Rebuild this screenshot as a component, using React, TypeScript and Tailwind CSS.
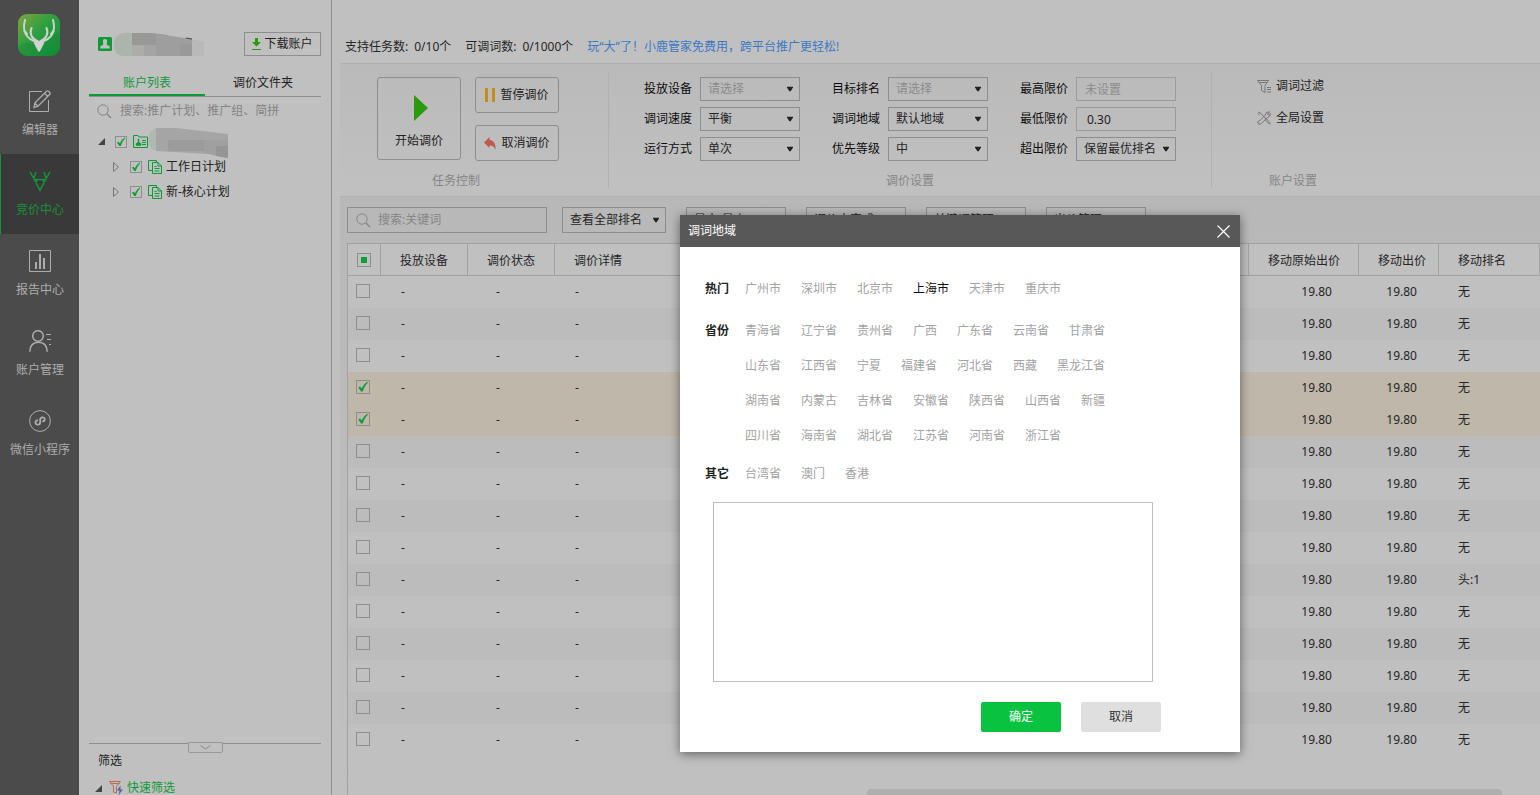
import { useState, ReactNode } from "react";
import clsx from "clsx";

const hotCities = ["广州市", "深圳市", "北京市", "上海市", "天津市", "重庆市"];
const provinces = [
  "青海省", "辽宁省", "贵州省", "广西", "广东省", "云南省", "甘肃省",
  "山东省", "江西省", "宁夏", "福建省", "河北省", "西藏", "黑龙江省",
  "湖南省", "内蒙古", "吉林省", "安徽省", "陕西省", "山西省", "新疆",
  "四川省", "海南省", "湖北省", "江苏省", "河南省", "浙江省",
];
const others = ["台湾省", "澳门", "香港"];

interface Row {
  id: number;
  checked: boolean;
  rank: string;
}

const initialRows: Row[] = Array.from({ length: 15 }, (_, i) => ({
  id: i,
  checked: i === 3 || i === 4,
  rank: i === 9 ? "头:1" : "无",
}));

function Checkbox({ label, checked, onChange, partial, small }: { label: string; checked?: boolean; onChange?: () => void; partial?: boolean; small?: boolean }) {
  return (
    <span className={clsx("relative block shrink-0", small ? "h-3 w-3" : "h-3.5 w-3.5")}>
      <input
        type="checkbox"
        aria-label={label}
        checked={checked ?? false}
        onChange={() => onChange?.()}
        className="block h-full w-full appearance-none border border-[#8e8e8e]"
      />
      {checked && (
        <svg viewBox="0 0 14 14" className="pointer-events-none absolute inset-0 h-full w-full" fill="#0d9f38">
          <path d="M2.300 7.600 4.300 6.600 5.700 8.600C7 5.600 8.800 3.400 11.300 1.800L11.900 2.500C9.500 5 7.900 7.800 6.800 11.600H5Z" />
        </svg>
      )}
      {partial && <span className="pointer-events-none absolute inset-1 bg-[#0d9f38]" />}
    </span>
  );
}

function Select({ label, value, muted, className }: { label: string; value: string; muted?: boolean; className?: string }) {
  return (
    <span className={clsx("relative block", className)}>
      <select
        aria-label={label}
        defaultValue={value}
        className={clsx(
          "block h-full w-full appearance-none border border-[#8e8e8e] bg-transparent pr-4 pl-[7px] text-xs",
          muted ? "text-[#8b8b8b]" : "text-[#262626]"
        )}
      >
        <option>{value}</option>
      </select>
      <svg viewBox="0 0 6 5" className="pointer-events-none absolute top-1/2 right-[7px] h-[5px] w-[6px] -translate-y-1/2" fill="#222">
        <path d="M0 0H6V1L3.500 5H2.500L0 1Z" />
      </svg>
    </span>
  );
}

function Field({ label, children }: { label: string; children: ReactNode }) {
  return (
    <div className="flex items-center gap-2">
      <span className="w-12 text-[#0c0c0c]">{label}</span>
      {children}
    </div>
  );
}

function SearchIcon() {
  return (
    <svg viewBox="0 0 15 15" className="h-[15px] w-[15px] shrink-0" fill="none" stroke="#888">
      <circle cx="6" cy="6" r="5.2" />
      <path d="M9.8 9.8 14 14" strokeWidth="1.6" />
    </svg>
  );
}

function NavItem({ label, active, children }: { label: string; active?: boolean; children: ReactNode }) {
  return (
    <a
      href="#"
      className={clsx(
        "flex h-20 flex-col items-center border-l pt-4",
        active ? "border-[#17913a] bg-[#393939] text-[#17913a]" : "border-transparent text-[#adadad]"
      )}
    >
      <svg viewBox="0 0 22 22" className="h-[22px] w-[22px] shrink-0" fill="none" stroke="currentColor">
        {children}
      </svg>
      <span className="mt-2 leading-5 whitespace-nowrap">{label}</span>
    </a>
  );
}

function Sidebar() {
  return (
    <nav className="w-[79px] shrink-0 bg-[#4b4b4b]">
      <div className="flex h-[74px] pt-3.5 pl-[18px]">
        <svg viewBox="0 0 42 42" className="h-[42px] w-[42px]">
          <defs>
            <linearGradient id="logo" x1="0" y1="0" x2="1" y2="1">
              <stop offset="0" stopColor="#7fa63c" />
              <stop offset="0.45" stopColor="#2e9e42" />
              <stop offset="1" stopColor="#119038" />
            </linearGradient>
          </defs>
          <rect width="42" height="42" rx="9" fill="url(#logo)" />
          <path d="M0 32C12 24 18 34 28 28S38 18 42 19V33a9 9 0 0 1-9 9H9a9 9 0 0 1-9-9Z" fill="#0c7f30" opacity="0.25" />
          <g fill="none" stroke="#cdd3cb" strokeWidth="2" strokeLinecap="round">
            <path d="M7 6C4 17 8 25 19 28" />
            <path d="M35 6C38 17 34 25 23 28" />
            <path d="M13.500 14C11 20 14 25 20 27.500" />
            <path d="M28.500 14C31 20 28 25 22 27.500" />
            <path d="M6.500 17 9 20M35.500 17 33 20" />
          </g>
          <path d="M15.500 28.500Q21 26.500 26.500 28.500L21.800 37.500H20.200Z" fill="#d3d3d3" />
        </svg>
      </div>
      <NavItem label="编辑器">
        <path d="M13 1.500H.5v20h19V10" />
        <path d="M5 17.500 5.800 13 17.500 1.200Q18.500.4 19.500 1.200L20.800 2.500Q21.500 3.400 20.800 4.300L9 16.200Z M15.500 3.300 18.800 6.600M5.800 13 9 16.200" strokeWidth="1.300" />
      </NavItem>
      <NavItem label="竞价中心" active>
        <path d="M.8 1.500 4.500 8 11 20.300 17.500 8 21.200 1.500M5 9.500H17M6.500 12.500 9 9.500M15.500 12.500 13 9.500M7 2 5 8M2.300 5.300 5.500 8M15 2 17 8M19.700 5.300 16.500 8" strokeWidth="1.500" />
      </NavItem>
      <NavItem label="报告中心">
        <path d="M.5.5h21v21H.5Z" />
        <path d="M7 12v7M11 4v15M15 8v11" strokeWidth="2" />
      </NavItem>
      <NavItem label="账户管理">
        <circle cx="9" cy="6" r="5.300" strokeWidth="1.500" />
        <path d="M.8 21.800C1 15.500 4.500 12.300 9.500 12.300S18 15.500 18.200 21.800" strokeWidth="1.500" />
        <path d="M17 4.500h5M18 9.500h4M20 14.500h2" />
      </NavItem>
      <NavItem label="微信小程序">
        <circle cx="11" cy="11" r="10.400" />
        <path d="M9 10.500C7 10.200 6.200 11.500 6.500 13 7 15.300 11 15.300 11.200 12.500V9.500C11.300 6.800 15.500 6.500 15.800 9 16 10.500 15 11.500 13.200 11.300" strokeWidth="1.800" />
      </NavItem>
    </nav>
  );
}

function PlanRow({ name }: { name: string }) {
  const [checked, setChecked] = useState(true);

  return (
    <li className="flex h-[25px] items-center pl-[34px] text-[#222]">
      <svg viewBox="0 0 6 10" className="h-2.5 w-1.5" fill="none" stroke="#777">
        <path d="M.5.5 5.500 5 .5 9.500Z" />
      </svg>
      <span className="ml-[11px]">
        <Checkbox small label={name} checked={checked} onChange={() => setChecked(!checked)} />
      </span>
      <svg viewBox="0 0 14 14" className="ml-1.5 h-3.5 w-3.5" fill="none" stroke="#0f9a38">
        <path d="M4 10.500H.5V.5H8.500V2" />
        <path d="M4.500 2.500H10L13.500 6v7.500h-9Z M10 2.500V6h3.500M6.500 6.500h2M6.500 8.500h5M6.500 11h5" />
      </svg>
      <span className="ml-1">{name}</span>
    </li>
  );
}

function AccountPanel() {
  const [rootChecked, setRootChecked] = useState(true);

  return (
    <aside className="flex w-[253px] shrink-0 flex-col border-r border-[#8e8e8e]">
      <div className="mx-2.5 mt-8 flex h-6 items-center pl-[9px]">
        <svg viewBox="0 0 14 14" className="h-3.5 w-3.5 shrink-0">
          <rect width="14" height="14" rx="1.500" fill="#0f9a38" />
          <path d="M7 2C4.800 2 4.500 4 5.200 6.200 5.700 7.500 5 8 2.300 9.300V11.500H11.700V9.300C9 8 8.300 7.500 8.800 6.200 9.500 4 9.200 2 7 2Z" fill="#c0c0c0" />
        </svg>
        <svg viewBox="0 0 90 25" className="ml-0.5 h-[25px] w-[90px]">
          <path d="M6 2Q10 0 18 1V24H10Q0 24 0 12 0 5 6 2Z" fill="#abb5ac" />
          <path d="M18 1H40L90 10V24H18Z" fill="#acacac" />
          <path d="M18 1H36L54 3V13H18Z" fill="#989898" />
          <path d="M30 13H42V24H30Z" fill="#a4a4a4" />
          <path d="M42 2 78 7V24H42V12Z" fill="#9e9e9e" />
          <path d="M66 12H78V24H66Z" fill="#999" />
          <path d="M78 8 90 10V24H78Z" fill="#b9b9b9" />
          <path d="M72 6 78 7" stroke="#444" />
        </svg>
        <button className="ml-auto flex h-6 w-[77px] items-center justify-center gap-[3px] border border-[#8e8e8e] text-[#222]">
          <svg viewBox="0 0 9 12" className="h-3 w-[9px]" fill="#2c9a0c">
            <path d="M3 0H6V4H9L4.500 8.500 0 4H3ZM0 11H9V12H0Z" />
          </svg>
          下载账户
        </button>
      </div>

      <div role="tablist" className="mx-2.5 mt-3 flex h-[29px] border-b border-[#8e8e8e]">
        <button role="tab" aria-selected="true" className="flex-1 border-b-2 border-[#0f9a38] pt-1 text-[#0f9a38]">
          账户列表
        </button>
        <button role="tab" aria-selected="false" className="flex-1 border-b-2 border-transparent pt-1 text-[#222]">
          调价文件夹
        </button>
      </div>

      <label className="mx-2.5 flex h-7 items-center gap-2 pl-2">
        <SearchIcon />
        <input
          aria-label="搜索"
          placeholder="搜索:推广计划、推广组、简拼"
          className="w-full bg-transparent text-xs outline-none placeholder:text-[#848484]"
        />
      </label>

      <ul className="mt-1">
        <li className="flex h-[25px] items-center pl-[19px]">
          <svg viewBox="0 0 7 7" className="h-[7px] w-[7px]" fill="#444">
            <path d="M7 0V7H0Z" />
          </svg>
          <span className="ml-2.5">
            <Checkbox small label="账户" checked={rootChecked} onChange={() => setRootChecked(!rootChecked)} />
          </span>
          <svg viewBox="0 0 15 13" className="ml-1.5 h-[13px] w-[15px]" fill="none" stroke="#0f9a38">
            <path d="M.5 12.500V.5H5L6 2H14.500V12.500ZM9 5.500h4M9 7.500h4M9 9.500h4" />
            <path d="M3 10.500V8.500L5 7.500V4H6V7.500L8 8.500V10.500Z" fill="#0f9a38" strokeWidth=".5" />
          </svg>
          <svg viewBox="0 0 80 32" className="h-8 w-20">
            <path d="M8 2V25Q0 23 0 14 0 5 8 2Z" fill="#aebaaf" />
            <path d="M8 2H28L80 8V32L60 28 8 25Z" fill="#a5a5a5" />
            <path d="M20 14H56V25H20Z" fill="#9b9b9b" />
            <path d="M56 14H80V32L56 27Z" fill="#a0a0a0" />
            <path d="M68 20H80V32L68 30Z" fill="#959595" />
          </svg>
        </li>
        <PlanRow name="工作日计划" />
        <PlanRow name="新-核心计划" />
      </ul>

      <div className="mx-2.5 mt-auto flex h-[52px] flex-col border-t border-[#8e8e8e]">
        <button
          aria-label="收起"
          className="-mt-0.5 flex h-[11px] w-[35px] shrink-0 items-center justify-center self-center rounded-b-xs border border-[#999] bg-[#c0c0c0]"
        >
          <svg viewBox="0 0 11 5" className="h-[5px] w-[11px]" fill="none" stroke="#888">
            <path d="M.5.5 5.500 4 10.500.5" />
          </svg>
        </button>
        <span className="pl-[9px] leading-4 text-[#222]">筛选</span>
        <a href="#" className="mt-[11px] flex h-4 shrink-0 items-center pl-1.5 text-[#0f9a38]">
          <svg viewBox="0 0 7 7" className="h-[7px] w-[7px]" fill="#444">
            <path d="M7 0V7H0Z" />
          </svg>
          <svg viewBox="0 0 14 14" className="ml-[7px] h-3.5 w-3.5" fill="none">
            <path d="M.5.500H11.500L7.500 5.500V12L4.500 11V5.500Z M1.500 2.500H10.500" stroke="#bd6a50" />
            <path d="M11.500 4.500 8 9.500H10.500L9.500 14 14 8.500H11.500Z" fill="#4d63ab" />
          </svg>
          <span className="ml-1">快速筛选</span>
        </a>
      </div>
    </aside>
  );
}

function Toolbar() {
  const box = "flex items-center justify-center rounded-[3px] border border-[#8e8e8e] text-[#222]";

  return (
    <section className="flex h-[125px] border-t border-[#b1b1b1] bg-linear-to-b from-[#bababa] to-[#c0c0c0] pt-2">
      <div className="flex w-[269px] shrink-0 flex-col border-r border-[#b1b1b1] pt-[5px]">
        <div className="flex gap-3.5 pl-[37px]">
          <button className={clsx(box, "h-[83px] w-[84px] flex-col gap-3 pt-1.5")}>
            <svg viewBox="0 0 14 26" className="ml-1 h-[26px] w-3.5" fill="#2c9a0c">
              <path d="M0 0 14 13 0 26Z" />
            </svg>
            开始调价
          </button>
          <div className="flex flex-col gap-3">
            <button className={clsx(box, "h-9 w-[84px] gap-[5px]")}>
              <svg viewBox="0 0 10 14" className="h-3.5 w-2.5" fill="#c98c13">
                <path d="M0 0H3V14H0ZM7 0H10V14H7Z" />
              </svg>
              暂停调价
            </button>
            <button className={clsx(box, "h-9 w-[84px] gap-[5px]")}>
              <svg viewBox="0 0 12 13" className="h-[13px] w-3" fill="#bd5a4c">
                <path d="M0 5.500 5.500 0V3C10 3.500 12 7 11.500 13 10 9.500 8.500 8.500 5.500 8.500V11Z" />
              </svg>
              取消调价
            </button>
          </div>
        </div>
        <p className="mt-3 pr-9 text-center leading-4 text-[#868686]">任务控制</p>
      </div>

      <div className="w-[603px] shrink-0 border-r border-[#b1b1b1] pt-[5px]">
        <div className="flex justify-center gap-8">
          <div className="flex flex-col gap-1.5">
            <Field label="投放设备"><Select label="投放设备" value="请选择" muted className="h-6 w-[100px]" /></Field>
            <Field label="调词速度"><Select label="调词速度" value="平衡" className="h-6 w-[100px]" /></Field>
            <Field label="运行方式"><Select label="运行方式" value="单次" className="h-6 w-[100px]" /></Field>
          </div>
          <div className="flex flex-col gap-1.5">
            <Field label="目标排名"><Select label="目标排名" value="请选择" muted className="h-6 w-[100px]" /></Field>
            <Field label="调词地域"><Select label="调词地域" value="默认地域" className="h-6 w-[100px]" /></Field>
            <Field label="优先等级"><Select label="优先等级" value="中" className="h-6 w-[100px]" /></Field>
          </div>
          <div className="flex flex-col gap-1.5">
            <Field label="最高限价">
              <input aria-label="最高限价" placeholder="未设置" className="h-6 w-[100px] border border-[#9c9c9c] px-2 text-xs placeholder:text-[#8b8b8b]" />
            </Field>
            <Field label="最低限价">
              <input aria-label="最低限价" defaultValue="0.30" className="h-6 w-[100px] border border-[#9c9c9c] px-2.5 text-xs text-[#222]" />
            </Field>
            <Field label="超出限价"><Select label="超出限价" value="保留最优排名" className="h-6 w-[100px]" /></Field>
          </div>
        </div>
        <p className="mt-3 text-center leading-4 text-[#868686]">调价设置</p>
      </div>

      <div className="flex w-[162px] flex-col pt-1.5 pl-[45px] text-[#222]">
        <a href="#" className="flex h-4 items-center gap-[5px]">
          <svg viewBox="0 0 14 13" className="h-[13px] w-3.5" fill="none" stroke="#777">
            <path d="M.5.5H11.500L8 5.500V12.500L4.500 10.500V5.500Z M2 2.500H10M10 7.500h4M10 9.500h4M10 12h4" />
          </svg>
          调词过滤
        </a>
        <a href="#" className="mt-4 flex h-4 items-center gap-[5px]">
          <svg viewBox="0 0 14 14" className="h-3.5 w-3.5" fill="none" stroke="#777">
            <path d="M1 1 3.500 2 9 8 8.500 9 12 13Q13.500 13 13 11.500L9.500 8M.8 3 2.500 3.500" />
            <path d="M12.500.8 10.500 3 11.300 4 13.300 2.500Q13.800 5.500 11 6L4.800 12Q4 13.500 2 13.300.3 12.500.8 10.700 1.500 9.500 3 9.500L8.300 4Q8.500.5 12.500.8ZM2.500 11.500h.5" />
          </svg>
          全局设置
        </a>
        <p className="mt-[47px] pl-3 leading-4 text-[#868686]">账户设置</p>
      </div>
    </section>
  );
}

function KeywordTable() {
  const [rows, setRows] = useState(initialRows);

  const toggle = (id: number) => {
    setRows(rows.map((r) => (r.id === id ? { ...r, checked: !r.checked } : r)));
  };

  const th = "border-r border-[#a2a2a2] pt-0.5 pl-[19px] text-left font-normal";

  return (
    <table className="w-full table-fixed border-separate border-spacing-0 text-[#262626]">
      <colgroup>
        <col className="w-[33px]" />
        <col className="w-[87px]" />
        <col className="w-[87px]" />
        <col />
        <col className="w-[110px]" />
        <col className="w-[80px]" />
        <col className="w-[101px]" />
      </colgroup>
      <thead>
        <tr className="h-[33px] bg-[#c0c0c0] [&>th]:border-y">
          <th className="border-r border-[#a2a2a2] pl-[9px]">
            <Checkbox label="全选" partial />
          </th>
          <th className={th}>投放设备</th>
          <th className={th}>调价状态</th>
          <th className={th}>调价详情</th>
          <th className={th}>移动原始出价</th>
          <th className={th}>移动出价</th>
          <th className={th}>移动排名</th>
        </tr>
      </thead>
      <tbody>
        {rows.map((row) => (
          <tr
            key={row.id}
            className={clsx("h-8", row.checked ? "bg-[#bfb7a9]" : row.id % 2 ? "bg-[#bcbcbc]" : "bg-[#c0c0c0]")}
          >
            <td className="pb-0.5 pl-2">
              <Checkbox label={`选择第${row.id + 1}行`} checked={row.checked} onChange={() => toggle(row.id)} />
            </td>
            <td className="pl-5">-</td>
            <td className="pl-7">-</td>
            <td className="pl-5">-</td>
            <td className="pr-[27px] text-right">19.80</td>
            <td className="pr-[22px] text-right">19.80</td>
            <td className="pl-[19px]">{row.rank}</td>
          </tr>
        ))}
      </tbody>
    </table>
  );
}

function RegionGroup({ title, items, selected, onSelect }: { title: string; items: string[]; selected: string; onSelect: (name: string) => void }) {
  return (
    <div className="flex gap-4">
      <h3 className="leading-5 font-bold text-[#222]">{title}</h3>
      <div className="flex w-[372px] flex-wrap gap-x-5 gap-y-[15px]">
        {items.map((name) => (
          <button
            key={name}
            onClick={() => onSelect(name)}
            className={clsx("leading-5", selected === name ? "text-[#111]" : "text-[#a3a3a3]")}
          >
            {name}
          </button>
        ))}
      </div>
    </div>
  );
}

function RegionDialog() {
  const [selected, setSelected] = useState("上海市");

  return (
    <div
      role="dialog"
      aria-labelledby="region-title"
      className="absolute top-[215px] left-[680px] w-[560px] bg-white shadow-[0_2px_10px_rgba(0,0,0,0.5)]"
    >
      <header className="flex h-8 items-center justify-between bg-[#585858] pr-2.5 pl-2 text-white">
        <h2 id="region-title">调词地域</h2>
        <button aria-label="关闭">
          <svg viewBox="0 0 13 13" className="h-[13px] w-[13px]" fill="none" stroke="white" strokeWidth="1.200">
            <path d="M.5.5 12.500 12.500M12.500.5.5 12.500" />
          </svg>
        </button>
      </header>
      <div className="px-[25px] pt-8 pb-5">
        <RegionGroup title="热门" items={hotCities} selected={selected} onSelect={setSelected} />
        <div className="mt-[22px] mb-[18px]">
          <RegionGroup title="省份" items={provinces} selected={selected} onSelect={setSelected} />
        </div>
        <RegionGroup title="其它" items={others} selected={selected} onSelect={setSelected} />
        <textarea aria-label="地域" className="mt-[18px] ml-2 block h-[180px] w-[440px] resize-none border border-[#bdbdbd] p-2 outline-none" />
        <div className="mt-5 mr-[54px] flex justify-end gap-5">
          <button className="h-[30px] w-20 rounded-xs bg-[#09c340] text-white">确定</button>
          <button className="h-[30px] w-20 rounded-xs bg-[#dfdfdf] text-[#333]">取消</button>
        </div>
      </div>
    </div>
  );
}

export default function App() {
  return (
    <div className="relative flex h-screen overflow-hidden bg-[#c0c0c0] font-['Noto_Sans','Noto_Sans_CJK_SC',sans-serif] text-xs">
      <Sidebar />
      <AccountPanel />
      <main className="flex min-w-0 flex-1 flex-col pl-2">
        <div className="flex h-[63px] shrink-0 items-end gap-3.5 pb-2 pl-[5px] text-[#262626]">
          <p className="flex gap-1.5">
            <span>支持任务数:</span>
            <span>0/10个</span>
          </p>
          <p className="flex gap-1.5">
            <span>可调词数:</span>
            <span>0/1000个</span>
          </p>
          <a href="#" className="text-[#3c78c3]">玩“大”了！小鹿管家免费用，跨平台推广更轻松!</a>
        </div>
        <Toolbar />
        <section className="mt-2 flex min-h-0 flex-1 flex-col border-t border-[#b1b1b1] bg-linear-to-b from-[#b8b8b8] to-[#c0c0c0] pl-[7px]">
          <div className="flex h-[46px] shrink-0 items-center">
            <label className="flex h-[26px] w-[200px] items-center gap-[7px] border border-[#8e8e8e] pl-2">
              <SearchIcon />
              <input
                aria-label="搜索关键词"
                placeholder="搜索:关键词"
                className="w-full bg-transparent text-xs outline-none placeholder:text-[#868686]"
              />
            </label>
            <Select label="排名" value="查看全部排名" className="ml-[15px] h-[26px] w-[104px]" />
            <div className="ml-5 flex gap-5">
              <Select label="范围" value="最大-最小" className="h-[26px] w-[100px]" />
              <Select label="调价" value="调价未完成" className="h-[26px] w-[100px]" />
              <Select label="关键词" value="关键词管理" className="h-[26px] w-[100px]" />
              <Select label="出价" value="出价管理" className="h-[26px] w-[100px]" />
            </div>
          </div>
          <div className="flex min-h-0 flex-1 flex-col border-l border-[#a2a2a2] bg-[#c0c0c0]">
            <div className="min-h-0 flex-1">
              <KeywordTable />
            </div>
            <div className="mr-[38px] ml-[519px] h-1.5 shrink-0 rounded-t-sm bg-[#afafaf]" />
          </div>
        </section>
      </main>
      <RegionDialog />
    </div>
  );
}
